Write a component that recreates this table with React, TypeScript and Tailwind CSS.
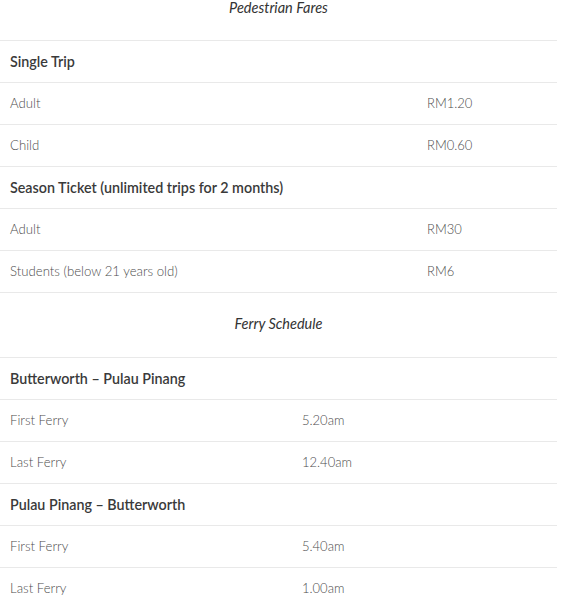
import React from "react";

type Row = { label: string; value?: string; head?: boolean };

const fares: Row[] = [
  { label: "Single Trip", head: true },
  { label: "Adult", value: "RM1.20" },
  { label: "Child", value: "RM0.60" },
  { label: "Season Ticket (unlimited trips for 2 months)", head: true },
  { label: "Adult", value: "RM30" },
  { label: "Students (below 21 years old)", value: "RM6" },
];

const schedule: Row[] = [
  { label: "Butterworth – Pulau Pinang", head: true },
  { label: "First Ferry", value: "5.20am" },
  { label: "Last Ferry", value: "12.40am" },
  { label: "Pulau Pinang – Butterworth", head: true },
  { label: "First Ferry", value: "5.40am" },
  { label: "Last Ferry", value: "1.00am" },
];

function Table({ rows, valueX }: { rows: Row[]; valueX: string }) {
  return (
    <div className="border-b border-[#e9e9e9]">
      {rows.map((r, i) => (
        <div
          key={i}
          className="h-[42px] border-t border-[#e9e9e9] flex items-center pl-[10px]"
        >
          {r.head ? (
            <span className="text-[14.3px] font-semibold text-[#3a3a3a]">{r.label}</span>
          ) : (
            <>
              <span className={`${valueX} shrink-0 text-[13.2px] font-light text-[#4d4d4d]`}>
                {r.label}
              </span>
              <span className="text-[13px] font-light text-[#4d4d4d]">{r.value}</span>
            </>
          )}
        </div>
      ))}
    </div>
  );
}

export default function App() {
  return (
    <div
      className="w-[557px] bg-white"
      style={{ fontFamily: "Lato, 'Open Sans', sans-serif" }}
    >
      <div className="h-[15px] leading-[15px] text-center italic text-[14.5px] text-[#333] mb-[25px]">
        Pedestrian Fares
      </div>
      <Table rows={fares} valueX="w-[417px]" />
      <div className="mt-[24px] h-[14px] leading-[14px] text-center italic text-[14.5px] text-[#333] mb-[26px]">
        Ferry Schedule
      </div>
      <Table rows={schedule} valueX="w-[292px]" />
    </div>
  );
}
